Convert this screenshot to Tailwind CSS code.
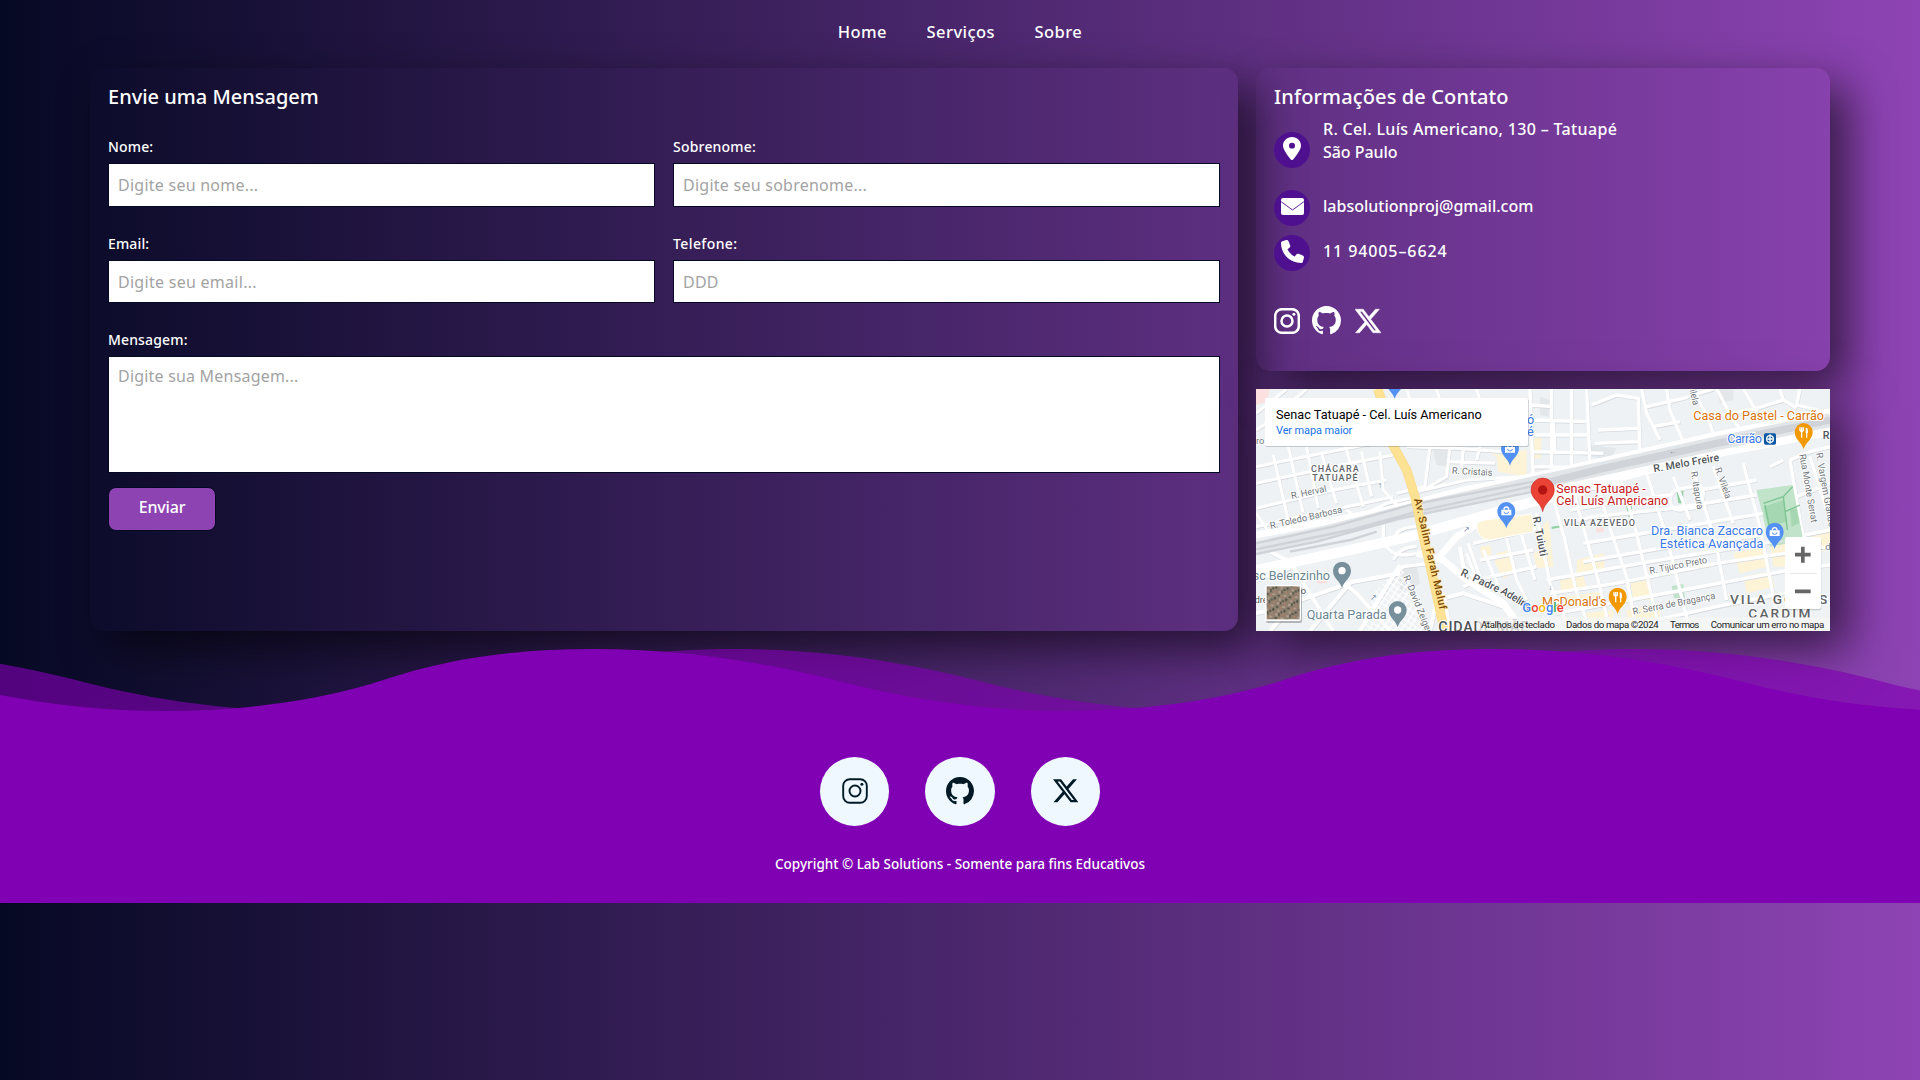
<!DOCTYPE html>
<html lang="pt-BR">
<head>
<meta charset="utf-8">
<title>Contato - Lab Solutions</title>
<script src="https://cdn.jsdelivr.net/npm/@tailwindcss/browser@4"></script>
</head>
<body class="h-[1080px] overflow-hidden bg-[linear-gradient(to_right,#060924,#8e44b4)] font-['Noto_Sans',sans-serif] font-medium text-white">
<svg class="hidden">
  <symbol id="insta" viewBox="0 0 26 26"><rect x="1.2" y="1.2" width="23.6" height="23.6" rx="6.6" fill="none" stroke="currentColor"/><circle cx="13" cy="13" r="5.5" fill="none" stroke="currentColor"/><circle cx="19.9" cy="6.2" r="1.5" fill="currentColor" stroke="none"/></symbol>
  <symbol id="github" viewBox="0 0 16 16"><path fill="currentColor" d="M8 0C3.58 0 0 3.58 0 8c0 3.54 2.29 6.53 5.47 7.59.4.07.55-.17.55-.38 0-.19-.01-.82-.01-1.49-2.01.37-2.53-.49-2.69-.94-.09-.23-.48-.94-.82-1.13-.28-.15-.68-.52-.01-.53.63-.01 1.08.58 1.23.82.72 1.21 1.87.87 2.33.66.07-.52.28-.87.51-1.07-1.78-.2-3.64-.89-3.64-3.95 0-.87.31-1.59.82-2.15-.08-.2-.36-1.02.08-2.12 0 0 .67-.21 2.2.82.64-.18 1.32-.27 2-.27s1.36.09 2 .27c1.53-1.04 2.2-.82 2.2-.82.44 1.1.16 1.92.08 2.12.51.56.82 1.27.82 2.15 0 3.07-1.87 3.75-3.65 3.95.29.25.54.73.54 1.48 0 1.07-.01 1.93-.01 2.2 0 .21.15.46.55.38A8.01 8.01 0 0 0 16 8c0-4.42-3.58-8-8-8"/></symbol>
  <symbol id="xlogo" viewBox="0 0 16 16"><path fill="currentColor" d="M12.6.75h2.454l-5.36 6.142L16 15.25h-4.937l-3.867-5.07-4.425 5.07H.316l5.733-6.57L0 .75h5.063l3.495 4.633L12.601.75Zm-.86 13.028h1.36L4.323 2.145H2.865z"/></symbol>
  <symbol id="bagpin" viewBox="-28 -28 56 80"><path d="M0 51C-5 30-27 22-27-1a27 27 0 0 1 54 0C27 22 5 30 0 51Z" fill="#5491f5"/><path d="M-15-5H15V12H-15Z" fill="#fff"/><path d="M-7-5a7 8 0 0 1 14 0" fill="none" stroke="#fff" stroke-width="4"/><path d="M-7 1a7 6 0 0 0 14 0" fill="none" stroke="#5491f5" stroke-width="3"/></symbol>
  <symbol id="foodpin" viewBox="-28 -28 56 80"><path d="M0 51C-5 30-27 22-27-1a27 27 0 0 1 54 0C27 22 5 30 0 51Z" fill="#f29900"/><path d="M-11-15V-4M-6-15V-4M-1-15V-4M-11-4H-1M-6-4V16M9 16V-13" stroke="#fff" stroke-width="4" fill="none"/><path d="M6 2V-14Q14-14 13 2Z" fill="#fff"/></symbol>
  <symbol id="graypin" viewBox="-28 -28 56 80"><path d="M0 51C-5 30-27 22-27-1a27 27 0 0 1 54 0C27 22 5 30 0 51Z" fill="#78909c"/><circle r="11" cy="-1" fill="#fff"/></symbol>
</svg>

<nav class="flex h-[68px] items-start justify-center gap-[39.500px] pt-[20px] text-[16.500px] leading-6 tracking-[0.45px]">
  <a>Home</a><a>Serviços</a><a>Sobre</a>
</nav>

<main class="mx-[90px] grid h-[563px] grid-cols-[1148px_574px] gap-[18px]">
  <form class="flex flex-col rounded-[14px] px-[18px] pt-[18px] shadow-[18px_18px_45px_rgba(0,0,0,0.6)]">
    <h2 class="text-[20px] leading-[22px]">Envie uma Mensagem</h2>
    <div class="mt-[31px] grid grid-cols-2 gap-x-[18px]">
      <label class="text-[14px] leading-4 tracking-[0.15px]">Nome:</label>
      <label class="text-[14px] leading-4 tracking-[0.2px]">Sobrenome:</label>
      <input placeholder="Digite seu nome..." class="mt-2 h-[44px] border border-[#050824] bg-white px-[9px] pb-px text-[16px] font-normal tracking-[0.25px] placeholder:text-[#a3a3a3]">
      <input placeholder="Digite seu sobrenome..." class="mt-2 h-[44px] border border-[#050824] bg-white px-[9px] pb-px text-[16px] font-normal tracking-[0.25px] placeholder:text-[#a3a3a3]">
      <label class="mt-[29px] text-[14px] leading-4 tracking-[0.15px]">Email:</label>
      <label class="mt-[29px] text-[14px] leading-4 tracking-[0.4px]">Telefone:</label>
      <input placeholder="Digite seu email..." class="mt-2 h-[43px] border border-[#050824] bg-white px-[9px] text-[16px] font-normal tracking-[0.28px] placeholder:text-[#a3a3a3]">
      <input placeholder="DDD" class="mt-2 h-[43px] border border-[#050824] bg-white px-[9px] text-[16px] font-normal tracking-[0.2px] placeholder:text-[#a3a3a3]">
    </div>
    <label class="mt-[29px] text-[14px] leading-4 tracking-[0.15px]">Mensagem:</label>
    <textarea placeholder="Digite sua Mensagem..." class="mt-2 h-[117px] resize-none border border-[#050824] bg-white px-[9px] pt-[7px] text-[16px] leading-6 font-normal tracking-[0.2px] placeholder:text-[#a3a3a3]"></textarea>
    <button type="button" class="mt-[14px] h-[44px] w-[108px] rounded-[8px] border border-[#050824] bg-[#8d43b2] pb-[5px] text-[16px] tracking-[-0.2px]">Enviar</button>
  </form>

  <div class="grid grid-rows-[303px_242px] gap-[18px]">
    <section class="rounded-[14px] px-[18px] pt-[18px] shadow-[18px_18px_45px_rgba(0,0,0,0.6)]">
      <h2 class="text-[20px] leading-[22px] tracking-[0.13px]">Informações de Contato</h2>
      <div class="mt-[10px] grid grid-cols-[36px_1fr] gap-x-[13px] text-[16px] leading-[23px]">
        <span class="mt-[14px] flex size-9 items-center justify-center rounded-full bg-[#4f108f] pb-[3px]"><svg class="h-[23px] w-[18px]" viewBox="0 0 384 512" preserveAspectRatio="none"><path fill="#fff" d="M215.7 499.2C267 435 384 279.4 384 192C384 86 298 0 192 0S0 86 0 192c0 87.4 117 243 168.3 307.2c12.3 15.3 35.1 15.3 47.4 0zM192 128a64 64 0 1 1 0 128 64 64 0 1 1 0-128z"/></svg></span>
        <p class="tracking-[0.33px]">R. Cel. Luís Americano, 130 – Tatuapé<br><span class="tracking-[-0.05px]">São Paulo</span></p>
        <span class="mt-[22px] flex size-9 items-center justify-center rounded-full bg-[#4f108f] pb-[3px]"><svg class="h-[17px] w-[23px]" viewBox="0 0 23 17"><rect width="23" height="17" rx="2" fill="#fff"/><path d="M0 3.6 11.500 12 23 3.6" fill="none" stroke="#4f108f" stroke-width=".9"/></svg></span>
        <p class="mt-[27px]">labsolutionproj@gmail.com</p>
        <span class="mt-[9px] flex size-9 items-center justify-center rounded-full bg-[#4f108f] pb-[3px]"><svg class="size-[23px]" viewBox="0 0 512 512"><path fill="#fff" d="M164.9 24.6c-7.7-18.6-28-28.5-47.4-23.2l-88 24C12.1 30.2 0 46 0 64C0 311.4 200.6 512 448 512c18 0 33.8-12.1 38.6-29.5l24-88c5.3-19.4-4.6-39.7-23.2-47.4l-96-40c-16.3-6.8-35.2-2.1-46.3 11.6L304.7 368C234.3 334.7 177.3 277.7 144 207.3L193.3 167c13.7-11.2 18.4-30 11.6-46.3l-40-96z"/></svg></span>
        <p class="mt-[14px] tracking-[0.9px]">11 94005–6624</p>
      </div>
      <div class="mt-[35px] flex items-center">
        <svg class="size-[26px]" stroke-width="2.5"><use href="#insta"/></svg>
        <svg class="ml-[12px] size-[29px]"><use href="#github"/></svg>
        <svg class="ml-[14px] size-[26px]" stroke="#fff" stroke-width=".3"><use href="#xlogo"/></svg>
      </div>
    </section>

    <div class="shadow-[18px_18px_45px_rgba(0,0,0,0.6)]">
    <svg class="block h-[242px] w-[574px] font-[Roboto,sans-serif] font-normal" viewBox="18 27 1722 726" fill="none">
      <defs>
        <g id="streets">
          <path stroke-width="9" d="M18 150 50 130 170 27M18 100 110 27M18 260 190 225 420 180M18 310 240 262 430 225M18 385 250 330 410 300M18 440 200 400 430 350M70 225 115 420M115 200 160 400M170 200 205 385M215 220 260 370M285 195 340 380M335 215 365 350M390 215 400 330 440 375 480 380M18 400 60 460M290 390 320 415 410 370 500 350M470 200 620 205 760 215M540 200 525 320 440 340M600 200 590 290 520 330M640 210 635 265M590 245 735 250M690 200 680 240M480 340 650 300 820 290M420 60 620 75 830 60M470 27 480 60M560 27 570 60M680 27 690 60"/>
          <path stroke-width="10" d="M840 27 850 300M905 27 905 285M965 27 965 270M1010 27 1020 250M840 120 1010 125M840 75 910 80M840 165 1015 165M850 215 1060 220M845 260 970 262M910 125 915 215M1025 75 1100 45 1165 55 1170 220 1120 260M1045 150 1165 145M1035 190 1165 185M1175 27 1190 100 1230 180M1250 27 1260 90 1310 210M1330 27 1380 130 1400 190M1190 80 1300 55 1390 27M1210 140 1290 125M1400 27 1450 120 1480 160M1480 27 1520 95M1370 115 1520 85 1600 60M1590 27 1600 60 1640 85M1650 27 1640 75 1740 100"/>
          <path stroke-width="10" d="M900 320 945 480 975 620 1020 753M960 300 1000 440 1050 620 1080 753M1040 300 1075 430 1130 590 1160 753M1110 290 1160 460 1230 753M1190 280 1250 470 1320 753M1270 290 1320 420M1330 270 1400 500 1430 660M1390 260 1450 430M1480 250 1530 440 1580 700M1000 330 1110 310M960 390 1110 365 1260 345M1350 330 1520 300M940 430 1030 410 1270 385 1520 345M1000 490 1240 450 1540 400M1000 545 1260 500 1540 465M890 600 1200 545 1540 490 1740 450M900 640 1100 610 1400 550 1740 500M920 700 1300 630 1620 570 1740 555M1130 740 1400 680 1700 620M1260 360Q1265 325 1300 325L1350 315Q1370 330 1350 380L1290 390Q1262 390 1260 360"/>
          <path stroke-width="10" d="M670 490 860 445M655 490 700 620M700 510 745 620M770 475 800 600 830 660M815 465 855 600M690 540 850 510M700 595 860 560M650 520 680 600 640 620M860 400 900 610 960 753M400 480 400 430 430 380M430 480Q440 440 500 440M430 540Q450 500 500 500M400 480Q420 540 500 520M440 580 460 560 540 550"/>
          <path stroke-width="12" d="M60 515 120 545 250 753M18 700 60 690 210 640 310 605 450 580M18 600 130 560M270 600 320 640 420 753M60 753 150 650M180 753 300 610M330 753 410 620 450 555M540 753 560 660 640 640 760 680 810 753M600 753 580 640M630 500 640 560 700 620"/>
          <path stroke-width="10" d="M1620 240 1650 420 1690 600M1680 230 1740 420M1620 240 1680 215 1740 200M1640 350 1740 310M1560 260 1600 240"/>
        </g>
        <pattern id="hatch" width="16" height="16" patternUnits="userSpaceOnUse" patternTransform="rotate(35)"><path d="M0 0H16M0 0V16" stroke="#fff" stroke-width="7"/></pattern>
        <pattern id="sat" width="34" height="34" patternUnits="userSpaceOnUse" patternTransform="rotate(8)"><path fill="#8f8070" d="M0 0h34v34H0z"/><path fill="#b5a08e" d="M3 3h7v6H3zM20 12h9v5h-9zM8 24h5v8H8z"/><path fill="#4d5142" d="M12 0h4v9h-4zM2 14h7v5H2zM26 22h6v8h-6zM18 28h5v6h-5z"/><path fill="#b27f6a" d="M24 2h6v5h-6zM13 14h5v7h-5z"/></pattern>
        <clipPath id="mapclip"><path d="M18 27H1740V753H18Z"/></clipPath>
      </defs>
      <g clip-path="url(#mapclip)">
      <path fill="#eef2f4" d="M18 27H1740V753H18Z"/>
      <path fill="#e3e7ea" d="M545 195H600V260L560 255ZM1020 195 1100 205 1080 240 1000 225ZM440 560 500 550 510 610 450 640ZM1400 27H1450V60L1410 70ZM870 50 900 60 895 110 870 105ZM1570 420 1600 400 1625 440 1600 470Z"/>
      <path fill="#fdf3d6" d="M690 205 740 225 830 210V290L745 275 740 230ZM845 175 875 172 872 235 848 235ZM690 500 720 495 725 525 695 530ZM740 520 780 510 800 575 760 595 735 550ZM855 465 895 420 905 500 870 520ZM850 520 905 505 910 560 860 565ZM980 540 1060 520 1065 570 980 590ZM930 600 1000 585 1010 630 935 640ZM950 650 1050 635 1055 660 960 680ZM1130 690 1230 670 1230 730 1130 745ZM1140 600 1200 590 1205 660 1150 660ZM1450 520 1540 500 1550 560 1470 580ZM1480 590 1560 575 1575 620 1490 640ZM1680 470 1740 455V510L1690 520ZM1560 495 1620 490 1620 560 1570 560ZM1000 700 1090 690 1090 720 1000 730Z"/>
      <path fill="#c0e3c9" d="M1520 330 1630 315 1665 480 1560 500Z"/><path fill="#a5d8b2" d="M1540 380 1600 360 1612 425 1555 440ZM1620 390 1640 385 1648 430 1625 440Z"/><path fill="#c0e3c9" d="M1265 618 1300 612 1305 655 1272 655Z"/>
      <path fill="#8fd0a0" d="M1280 335 1300 333V365L1308 370H1285ZM1128 375 1145 375 1148 410H1135ZM905 440 940 435V440L905 447Z"/>
      <path fill="#fbe0df" d="M1038 445 1060 440 1062 455 1040 458ZM200 600 230 596V610H200ZM18 27H60L50 65 18 75Z"/>
      <use href="#streets" stroke="#d7dbe0" transform="translate(1.5 2.5)"/>
      <use href="#streets" stroke="#fff"/>
      <path fill="#c0e3c9" d="M1522 332 1628 318 1658 470 1560 490Z"/><path fill="#a5d8b2" d="M1540 380 1600 360 1612 425 1555 440ZM1620 390 1640 385 1648 430 1625 440Z"/><path stroke="#7cc491" stroke-width="4" d="M1540 370 1600 350 1628 320M1600 350 1612 450M1545 375 1560 450M1605 395 1650 375"/>
      <path fill="url(#hatch)" d="M370 640 450 560 500 640 540 753H340Z"/>
      <g stroke="#fff">
        <path stroke-width="30" d="M18 570 300 510 480 470 620 430 850 365 1000 330"/>
        <path stroke-width="34" d="M870 350 1060 300 1350 225 1740 150"/>
        <path stroke-width="20" d="M18 465 410 390 640 330 870 285 1400 165 1740 95"/>
        <path stroke-width="20" d="M500 520 580 540 650 600 760 670 820 753M560 540 620 470 720 410"/>
      </g>
      <path fill="#fdf3d6" stroke="#fff" stroke-width="3" d="M680 440Q680 425 705 420L845 402 852 455 720 480Q685 480 680 440Z"/>
      <path stroke="#e3e6e9" stroke-width="42" d="M18 505 200 465 450 400 840 312 1060 265 1400 190 1740 120"/>
      <g stroke="#cfd3d8" stroke-width="7">
        <path d="M18 490 250 440 480 375 850 305M18 508 300 450 500 395 850 318M18 522 200 485 450 415 850 335M120 515 300 480 380 455"/>
      </g>
      <path stroke="#d0d4d9" stroke-width="22" d="M850 318 1060 265 1400 190 1740 120"/>
      <path stroke="#fad98a" stroke-width="28" d="M383 27 400 75 420 180 470 270 495 350 520 470 550 600 583 753"/>
      <path stroke="#fde293" stroke-width="24" d="M383 27 400 75 420 180 470 270 495 350 520 470 550 600 583 753"/>
      <g fill="#7d8ea4" font-size="24"><text x="384" y="325">↑</text><text x="638" y="455">↗</text><text x="360" y="660">↗</text><text x="895" y="630">↓</text><text x="1256" y="222">←</text></g>
      <g stroke="#fff" stroke-width="5" paint-order="stroke" fill="#70757a" font-size="28">
        <text x="125" y="357" transform="rotate(-12 125 357)" textLength="108">R. Herval</text>
        <text x="62" y="447" transform="rotate(-13 62 447)" textLength="222">R. Toledo Barbosa</text>
        <text x="605" y="281" transform="rotate(3 605 281)" textLength="122">R. Cristais</text>
        <text x="460" y="590" transform="rotate(68 460 590)" textLength="185">R. David Zeiger</text>
        <text x="1322" y="276" transform="rotate(80 1322 276)" textLength="115">R. Itapura</text>
        <text x="1394" y="266" transform="rotate(70 1394 266)" textLength="98">R. Vilela</text>
        <text x="1307" y="-14" transform="rotate(76 1307 -14)" textLength="94">R. Vilela</text>
        <text x="1648" y="224" transform="rotate(80 1648 224)" textLength="208">Rua Monte Serrat</text>
        <text x="1698" y="220" transform="rotate(80 1698 220)" textLength="225">R. Vargem Grande</text>
        <text x="1200" y="582" transform="rotate(-11 1200 582)" textLength="176">R. Tijuco Preto</text>
        <text x="1150" y="704" transform="rotate(-11 1150 704)" textLength="252">R. Serra de Bragança</text>
        <text x="1694" y="510">R. d</text>
        <text x="18" y="193">ro</text><text x="152" y="642" fill="#4d5156">o</text><text x="14" y="668" fill="#4d5156" font-size="27">dre</text>
      </g>
      <g stroke="#fff" stroke-width="5" paint-order="stroke" fill="#50555a" font-size="32" font-weight="500">
        <text x="848" y="412" transform="rotate(79 848 412)" textLength="120">R. Tuiuti</text>
        <text x="1212" y="277" transform="rotate(-10 1212 277)" textLength="200">R. Melo Freire</text>
        <text x="1718" y="178">R.</text>
        <text transform="translate(630 585) rotate(25)" textLength="125">R. Padre</text><text transform="translate(750 638) rotate(32)" textLength="104">Adelino</text>
        <text transform="translate(492 358) rotate(75)" textLength="46" fill="#7d4a08" stroke="#fde293">Av.</text><text transform="translate(505 412) rotate(77)" textLength="285" fill="#7d4a08" stroke="#fde293">Salim Farah Maluf</text>
      </g>
      <g stroke="#fff" stroke-width="6" paint-order="stroke" fill="#5f6468" font-size="27" font-weight="500">
        <text x="183" y="277" textLength="143">CHÁCARA</text><text x="187" y="304" textLength="136">TATUAPÉ</text>
        <text x="941" y="439" textLength="214">VILA AZEVEDO</text>
        <text x="1440" y="672" textLength="292" font-size="41">VILA GOMES</text><text x="1495" y="713" textLength="186" font-size="41">CARDIM</text>
        <text x="565" y="755" textLength="270" font-size="43" fill="#4d5156">CIDADE MÃE</text>
      </g>
      <g stroke="#fff" stroke-width="6" paint-order="stroke" font-size="38">
        <g fill="#6b8592"><text x="8" y="599" textLength="232">sc Belenzinho</text><text x="170" y="718" textLength="240">Quarta Parada</text></g>
        <g fill="#c5221f"><text x="919" y="338" textLength="268">Senac Tatuapé -</text><text x="919" y="376" textLength="336">Cel. Luís Americano</text></g>
        <g fill="#d9730d"><text x="1330" y="119" textLength="392">Casa do Pastel - Carrão</text><text x="876" y="677" textLength="194">McDonald's</text></g>
        <g fill="#3b78e7"><text x="1432" y="189" textLength="104">Carrão</text><text x="1203" y="465" textLength="336">Dra. Bianca Zaccaro</text><text x="1229" y="503" textLength="311">Estética Avançada</text><text x="831" y="131">ó</text><text x="831" y="167">é</text></g>
      </g>
      <rect x="1542" y="160" width="36" height="34" rx="5" fill="#0b57a4"/><circle cx="1560" cy="177" r="10" stroke="#fff" stroke-width="4"/><path d="M1560 163V191M1552 177H1568" stroke="#fff" stroke-width="4"/>
      <use href="#bagpin" x="406" y="-22" width="56" height="80"/><use href="#bagpin" x="752" y="178" width="56" height="80"/><use href="#bagpin" x="741" y="366" width="56" height="80"/><use href="#bagpin" x="1546" y="428" width="56" height="80"/>
      <use href="#foodpin" x="1633" y="129" width="56" height="80"/><use href="#foodpin" x="1075" y="623" width="56" height="80"/>
      <use href="#graypin" x="248" y="545" width="56" height="80"/><use href="#graypin" x="415" y="663" width="56" height="80"/>
      <path fill="#ea4335" stroke="#c5221f" stroke-width="1.5" d="M878 395C872 365 843 358 843 329a35 35 0 0 1 70 0C913 358 884 365 878 395Z"/><circle cx="878" cy="330" r="14" fill="#b31412"/>
      <path fill="#f5f5f5" fill-opacity=".75" d="M680 712H1740V753H680Z"/>
      <g fill="#222" font-size="29"><text x="693" y="743" textLength="222">Atalhos de teclado</text><text x="948" y="743" textLength="278">Dados do mapa ©2024</text><text x="1260" y="743" textLength="88">Termos</text><text x="1382" y="743" textLength="341">Comunicar um erro no mapa</text></g>
      <text x="817" y="695" font-size="39" font-weight="500" textLength="124" stroke="#fff" stroke-width="5" paint-order="stroke"><tspan fill="#4285f4">G</tspan><tspan fill="#ea4335">o</tspan><tspan fill="#fbbc04">o</tspan><tspan fill="#4285f4">g</tspan><tspan fill="#34a853">l</tspan><tspan fill="#ea4335">e</tspan></text>
      <rect x="46" y="57" width="790" height="144" rx="5" fill="#000" fill-opacity=".18"/><rect x="45" y="54" width="789" height="144" rx="5" fill="#fff"/>
      <text x="78" y="117" fill="#000" font-size="38" textLength="617">Senac Tatuapé - Cel. Luís Americano</text><text x="78" y="162" fill="#1a73e8" font-size="33" textLength="229">Ver mapa maior</text>
      <rect x="48" y="621" width="108" height="108" rx="6" fill="#000" fill-opacity=".25"/><rect x="45" y="615" width="108" height="108" rx="6" fill="#fff"/><rect x="50" y="619" width="99" height="99" fill="url(#sat)"/>
      <rect x="1606" y="475" width="108" height="216" rx="6" fill="#000" fill-opacity=".16"/><rect x="1605" y="471" width="108" height="216" rx="6" fill="#fff"/><path stroke="#666" stroke-width="11" d="M1635 524H1682M1658.500 500V548M1635 634H1682"/><path stroke="#e6e6e6" stroke-width="3" d="M1620 580H1700"/>
      </g>
    </svg>
    </div>
  </div>
</main>

<footer class="relative mt-[18px] flex h-[254px] flex-col items-center">
  <svg class="absolute inset-0 h-[254px] w-full" viewBox="0 649 1920 254" fill="#8000b3">
    <defs><path id="wave" d="M-733 903V711C-648 711-580 701-515 679.500C-450 658-385 649-306 649C-210 649-130 664-65 680C-5 696 75 711 167 711C240 711 320 701 385 679.500C450 658 515 649 594 649C690 649 770 664 835 680C895 696 975 711 1067 711C1140 711 1220 701 1285 679.500C1350 658 1415 649 1494 649C1590 649 1670 664 1735 680C1795 696 1875 711 1967 711V903Z"/></defs>
    <use href="#wave" x="141" opacity=".64"/>
    <use href="#wave"/>
  </svg>
  <div class="relative mt-[107.500px] flex gap-[36px] text-[#021a26]">
    <a class="flex size-[69.500px] items-center justify-center rounded-full bg-[#f0f8ff] pb-px"><svg class="size-[26px]" stroke-width="1.9"><use href="#insta"/></svg></a>
    <a class="flex size-[69.500px] items-center justify-center rounded-full bg-[#f0f8ff] pb-px"><svg class="size-[28px]"><use href="#github"/></svg></a>
    <a class="flex size-[69.500px] items-center justify-center rounded-full bg-[#f0f8ff] pb-px"><svg class="size-[25.500px]"><use href="#xlogo"/></svg></a>
  </div>
  <p class="relative mt-[28px] text-[13.500px] leading-5 whitespace-nowrap">Copyright © Lab Solutions - Somente para fins Educativos</p>
</footer>
</body>
</html>
